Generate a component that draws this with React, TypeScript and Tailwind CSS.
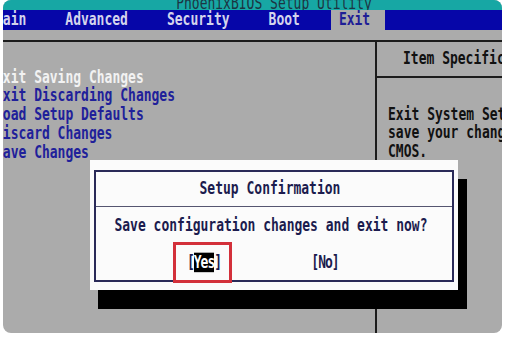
import React from 'react';

function Line({ children, className = '' }: { children: React.ReactNode; className?: string }) {
  return (
    <div className={`h-[18.75px] flex items-center whitespace-nowrap ${className}`}>
      <span className="inline-block scale-y-[1.3]">{children}</span>
    </div>
  );
}

export default function App() {
  return (
    <div className="w-[506px] h-[337px] bg-white pl-[3px]">
      <div className="relative w-[499px] h-[333px] rounded-[8px] overflow-hidden bg-[#ababab] flex flex-col font-['DejaVu_Sans_Mono','Liberation_Mono',monospace] text-[13px] font-bold">
        {/* Title strip */}
        <div className="h-[10px] bg-[#17a7a4] flex justify-center items-end overflow-hidden">
          <span className="inline-block ml-[43px] mb-0 leading-none scale-y-[1.3] text-[#1d3442] whitespace-nowrap font-normal">
            PhoenixBIOS Setup Utility
          </span>
        </div>

        {/* Menu bar */}
        <div className="h-[20px] bg-[#0606a8] flex items-stretch -ml-[16px] gap-[23px] text-[#d4d4ec] whitespace-nowrap">
          <div className="flex items-center px-[8px]"><span className="inline-block scale-y-[1.3]">Main</span></div>
          <div className="flex items-center px-[8px]"><span className="inline-block scale-y-[1.3]">Advanced</span></div>
          <div className="flex items-center px-[8px]"><span className="inline-block scale-y-[1.3]">Security</span></div>
          <div className="flex items-center px-[8px]"><span className="inline-block scale-y-[1.3]">Boot</span></div>
          <div className="flex items-center pl-[8px] pr-[15px] bg-[#ababab] text-[#1e1e96]"><span className="inline-block scale-y-[1.3]">Exit</span></div>
        </div>

        <div className="h-[10px]" />
        <div className="h-[2px] bg-[#1c1c1c]" />

        {/* Body */}
        <div className="flex-1 flex">
          <div className="w-[380px] pt-[26px] -ml-[8px] text-[#20209a]">
            <Line className="text-[#f2f2f2]">Exit Saving Changes</Line>
            <Line>Exit Discarding Changes</Line>
            <Line>Load Setup Defaults</Line>
            <Line>Discard Changes</Line>
            <Line>Save Changes</Line>
          </div>
          <div className="w-[2px] bg-[#1c1c1c]" />
          <div className="flex-1 flex flex-col overflow-hidden text-[#111]">
            <div className="h-[34px] flex items-center pl-[26px] whitespace-nowrap">
              <span className="inline-block scale-y-[1.3]">Item Specific Help</span>
            </div>
            <div className="h-[2px] bg-[#1c1c1c]" />
            <div className="pt-[27px] pl-[11px]">
              <Line>Exit System Setup and</Line>
              <Line>save your changes to</Line>
              <Line>CMOS.</Line>
            </div>
          </div>
        </div>

        {/* Dialog shadow */}
        <div className="absolute left-[95px] top-[179px] w-[369px] h-[130px] bg-black" />

        {/* Dialog */}
        <div className="absolute left-[87px] top-[160px] w-[368px] h-[130px] bg-[#fbfbfb] pt-[10px] pb-[8px] px-[4px] text-[#1c1c4e]">
          <div className="h-full border-2 border-[#2a2a58] flex flex-col">
            <div className="h-[35px] border-b border-[#555570] flex items-center justify-center pr-[8px] whitespace-nowrap">
              <span className="inline-block scale-y-[1.3]">Setup Confirmation</span>
            </div>
            <div className="h-[38px] flex items-center justify-center pr-[6px] whitespace-nowrap">
              <span className="inline-block scale-y-[1.3]">Save configuration changes and exit now?</span>
            </div>
            <div className="flex-1 flex items-center pl-[83px] gap-[71px] whitespace-nowrap">
              <div className="w-[50px] flex justify-center">
                <span className="inline-block scale-y-[1.3] tracking-[-1px]">
                  [<span className="bg-black text-white">Yes</span>]
                </span>
              </div>
              <div className="w-[50px] flex justify-center">
                <span className="inline-block scale-y-[1.3] tracking-[-1px]">[No]</span>
              </div>
            </div>
          </div>
        </div>

        {/* Highlight marker */}
        <div className="absolute left-[170px] top-[242px] w-[59px] h-[41px] border-[3px] border-[#d3303a]" />
      </div>
    </div>
  );
}
